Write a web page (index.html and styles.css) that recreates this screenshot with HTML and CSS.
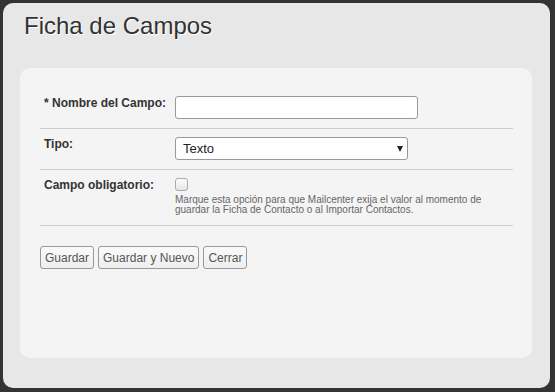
FILE: index.html
```html
<!DOCTYPE html>
<html lang="es">
<head>
    <meta charset="UTF-8">
    <title>Ficha de Campos</title>
    <link rel="stylesheet" href="styles.css">
</head>
<body>
    <div class="window">
        <h1 class="window-title">Ficha de Campos</h1>

        <div class="card">
            <form class="field-form">
                <div class="form-row">
                    <label for="nombre">* Nombre del Campo:</label>
                    <div class="form-control">
                        <input type="text" id="nombre" name="nombre" class="text-input">
                    </div>
                </div>
                <div class="form-row">
                    <label for="tipo">Tipo:</label>
                    <div class="form-control">
                        <span class="select-wrap">
                            <select id="tipo" name="tipo" class="select-input">
                                <option>Texto</option>
                                <option>Número</option>
                                <option>Fecha</option>
                            </select>
                        </span>
                    </div>
                </div>
                <div class="form-row">
                    <label for="obligatorio">Campo obligatorio:</label>
                    <div class="form-control">
                        <input type="checkbox" id="obligatorio" name="obligatorio" class="check-input">
                        <p class="help-text">Marque esta opción para que Mailcenter exija el valor al momento de<br>guardar la Ficha de Contacto o al Importar Contactos.</p>
                    </div>
                </div>

                <div class="actions">
                    <button type="submit">Guardar</button>
                    <button type="button">Guardar y Nuevo</button>
                    <button type="button">Cerrar</button>
                </div>
            </form>
        </div>
    </div>
</body>
</html>
```

FILE: styles.css
```css
html, body {
    margin: 0;
    padding: 0;
}
body {
    background-color: #333;
    font-family: "Liberation Sans", Arial, sans-serif;
    color: #333;
    padding: 3px;
    box-sizing: border-box;
    height: 392px;
}
.window {
    width: 547px;
    height: 385px;
    background-color: #e7e7e7;
    border-radius: 10px;
    padding: 0 18px 0 17px;
    box-sizing: border-box;
    overflow: hidden;
}
.window-title {
    margin: 0;
    padding: 10px 0 0 4px;
    height: 65px;
    box-sizing: border-box;
    font-size: 24px;
    font-weight: normal;
    line-height: 26px;
    color: #333;
    text-shadow: 1px 1px 0 #fff;
}
.card {
    background-color: #f4f4f4;
    border-radius: 10px;
    height: 290px;
    padding: 20px 19px 0 20px;
    box-sizing: border-box;
}
.form-row {
    display: flex;
    padding: 8px 0 9px 4px;
    border-bottom: 1px solid #ccc;
}
.form-row label {
    width: 131px;
    flex-shrink: 0;
    font-size: 12px;
    font-weight: bold;
    line-height: 14px;
}
.form-control {
    flex: 1;
}
.text-input {
    display: block;
    width: 243px;
    height: 23px;
    border: 1px solid #999;
    border-radius: 3px;
    background: #fff;
    box-sizing: border-box;
    margin: 0;
    font-family: inherit;
    font-size: 13px;
}
.select-wrap {
    position: relative;
    display: block;
    width: 233px;
}
.select-wrap::after {
    content: "";
    position: absolute;
    right: 5px;
    top: 9px;
    border-left: 3px solid transparent;
    border-right: 3px solid transparent;
    border-top: 6px solid #222;
    pointer-events: none;
}
.select-input {
    -webkit-appearance: none;
    appearance: none;
    display: block;
    width: 233px;
    height: 23px;
    border: 1px solid #999;
    border-radius: 3px;
    background: #fff;
    box-sizing: border-box;
    margin: 0;
    padding: 0 0 0 7px;
    font-family: inherit;
    font-size: 13px;
    color: #222;
}
.check-input {
    -webkit-appearance: none;
    appearance: none;
    display: block;
    width: 13px;
    height: 13px;
    margin: 0;
    border: 1px solid #aaa;
    border-radius: 3px;
    background: linear-gradient(#fdfdfd, #e6e6e6);
    box-sizing: border-box;
}
.help-text {
    margin: 4px 0 1px;
    font-size: 10px;
    line-height: 10px;
    color: #666;
}
.actions {
    display: flex;
    gap: 4px;
    padding-top: 20px;
}
.actions button {
    height: 23px;
    padding: 0 4px;
    border: 1px solid #999;
    border-radius: 3px;
    background: linear-gradient(#fafafa, #eeeeee);
    font-family: inherit;
    font-size: 12px;
    color: #555;
    cursor: pointer;
}
```
